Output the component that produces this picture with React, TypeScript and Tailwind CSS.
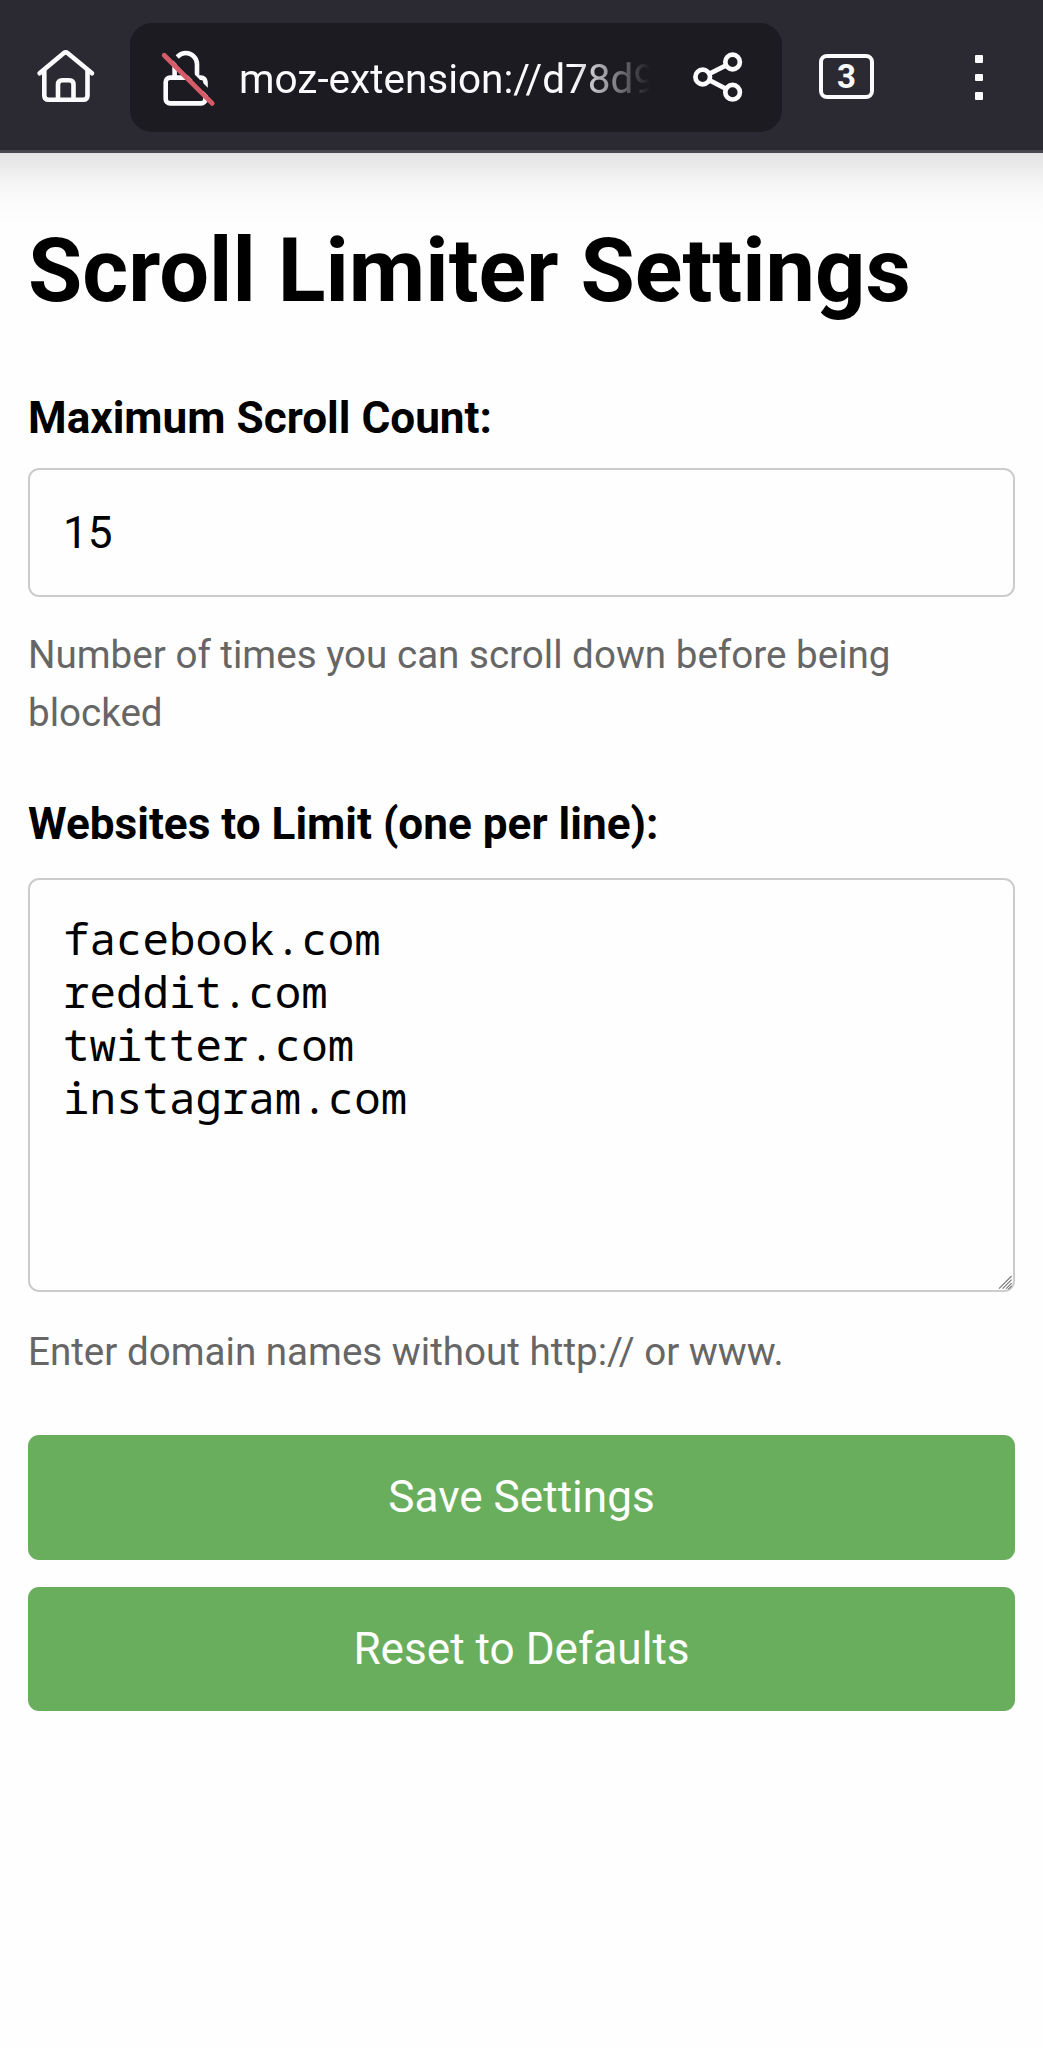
function HomeIcon() {
  return (
    <svg className="h-[60px] w-[60px]" viewBox="36 46 60 60" fill="none" stroke="#fbfbfe" strokeWidth="4.6" strokeLinecap="round" strokeLinejoin="round">
      <path d="M39.6 73.3 L63.6 53.3 Q65.7 51.6 67.8 53.3 L92 73.3" />
      <path d="M44.3 71 V95.4 Q44.3 99.7 48.6 99.7 H83.2 Q87.5 99.7 87.5 95.4 V71" />
      <path d="M58 99 V84.5 Q58 80.2 62.3 80.2 H69.2 Q73.5 80.2 73.5 84.5 V99" />
    </svg>
  );
}

function InsecureIcon() {
  return (
    <svg className="h-[60px] w-[56px]" viewBox="160 48 56 60" fill="none" strokeWidth="4.6">
      <g stroke="#fbfbfe">
        <path d="M174.6 77 V64.2 A11.2 11.2 0 0 1 197 64.2 V77" />
        <rect x="165.7" y="77.6" width="39.8" height="25.8" rx="4.4" />
      </g>
      <path d="M167.6 51.2 L216 99.8" stroke="#1c1b22" strokeWidth="5.4" />
      <path d="M164.2 55.2 L212.2 103.4" stroke="#d55c68" strokeWidth="4.8" strokeLinecap="round" />
    </svg>
  );
}

function ShareIcon() {
  return (
    <svg className="h-[56px] w-[56px]" viewBox="690 49 56 56" fill="none" stroke="#fbfbfe" strokeWidth="4.7">
      <circle cx="702.7" cy="77" r="7.3" />
      <circle cx="732.6" cy="62" r="7.3" />
      <circle cx="732.6" cy="92.2" r="7.3" />
      <path d="M709.2 73.8 L726.1 65.3 M709.2 80.2 L726.1 88.9" />
    </svg>
  );
}

function BrowserBar() {
  return (
    <header className="flex h-[153px] items-start border-b-3 border-[#47464f] bg-[#2b2a33] pt-[23px]">
      <div className="ml-[36px] mt-[23px] w-[94px] shrink-0">
        <HomeIcon />
      </div>
      <div className="flex h-[109px] w-[652px] shrink-0 items-start rounded-[22px] bg-[#1c1b22]">
        <div className="ml-[29.5px] mt-[25px] w-[79.5px] shrink-0">
          <InsecureIcon />
        </div>
        <div className="mt-[26px] w-[413px] shrink-0 whitespace-nowrap text-[40.5px] leading-[60px] text-[#fbfbfe] [mask-image:linear-gradient(to_right,black_335px,transparent_411px)]">
          moz-extension://d78d9
        </div>
        <div className="ml-[38px] mt-[26px]">
          <ShareIcon />
        </div>
      </div>
      <div className="ml-[37px] mt-[31px] flex h-[45px] w-[55px] shrink-0 items-center justify-center rounded-[8px] border-[4.5px] border-[#fbfbfe] text-[33px] font-bold leading-[36px] text-[#fbfbfe]">
        3
      </div>
      <div className="ml-[101px] mt-[32px] flex flex-col gap-[11px]">
        <span className="size-[7.5px] rounded-[1px] bg-[#fbfbfe]" />
        <span className="size-[7.5px] rounded-[1px] bg-[#fbfbfe]" />
        <span className="size-[7.5px] rounded-[1px] bg-[#fbfbfe]" />
      </div>
    </header>
  );
}

export default function App() {
  return (
    <div className="h-[2048px] w-[1043px] overflow-hidden bg-[#fefefe] font-['Roboto',sans-serif] text-black">
      <BrowserBar />
      <main className="h-[1895px] bg-[linear-gradient(to_bottom,#e2e2e2_0px,#ebebeb_14px,#f5f5f5_30px,#fbfbfb_48px,#fefefe_72px)] px-[28px] pt-[52px]">
        <h1 className="text-[88.25px] font-bold leading-[132px]">Scroll Limiter Settings</h1>

        <section className="mt-[48px]">
          <label htmlFor="count" className="block text-[44.13px] font-bold leading-[66px]">
            Maximum Scroll Count:
          </label>
          <input
            id="count"
            defaultValue="15"
            className="mt-[17px] block h-[129px] w-full rounded-[11px] border-2 border-[#ccc] bg-[#fefefe] px-[33px] text-[44.13px] outline-none"
          />
          <p className="mt-[29px] text-[38.6px] leading-[58px] text-[#666]">
            Number of times you can scroll down before being blocked
          </p>
        </section>

        <section className="mt-[49px]">
          <label htmlFor="sites" className="block text-[44.13px] font-bold leading-[66px]">
            Websites to Limit (one per line):
          </label>
          <div className="relative mt-[21px]">
            <textarea
              id="sites"
              spellCheck={false}
              defaultValue={'facebook.com\nreddit.com\ntwitter.com\ninstagram.com'}
              className="block h-[414px] w-full resize-none overflow-hidden rounded-[11px] border-2 border-[#ccc] bg-[#fefefe] px-[33px] pt-[32px] font-['Noto_Sans_Mono',monospace] text-[44.13px] leading-[53.15px] outline-none"
            />
            <svg className="absolute bottom-[2px] right-[2px] h-4 w-4" viewBox="0 0 16 16" stroke="#777" strokeWidth="1.1" fill="none">
              <path d="M2 14.6 L14.6 2 M5.6 14.6 L14.6 5.6 M9.2 14.6 L14.6 9.2 M11.4 15.2 L14.8 11.8" />
            </svg>
          </div>
          <p className="mt-[31px] text-[38.6px] leading-[58px] text-[#666]">
            Enter domain names without http:// or www.
          </p>
        </section>

        <div className="mt-[54px] flex flex-col gap-[27px] text-[44.13px] text-[#fefefe]">
          <button className="h-[124.5px] rounded-[11px] bg-[#69ae5d]">Save Settings</button>
          <button className="h-[124.5px] rounded-[11px] bg-[#69ae5d]">Reset to Defaults</button>
        </div>
      </main>
    </div>
  );
}
